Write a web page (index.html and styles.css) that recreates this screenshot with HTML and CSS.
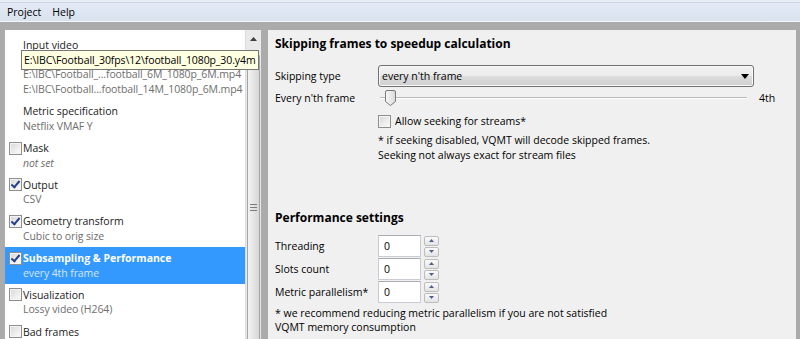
FILE: index.html
```html
<!DOCTYPE html>
<html lang="en">
<head>
<meta charset="UTF-8" />
<title>VQMT - Subsampling &amp; Performance</title>
<link rel="stylesheet" href="styles.css">
</head>
<body>
<div class="titlestrip"></div>
<div class="menubar">
  <span class="menu-item">Project</span>
  <span class="menu-item">Help</span>
</div>
<div class="workspace">
  <div class="tree-pane">
    <ul class="tree">
      <li class="node">
        <div class="node-title no-check">Input video</div>
        <div class="node-sub">E:\IBC\Football_30fps\12\football_1080p_30.y4m</div>
        <div class="node-sub">E:\IBC\Football_...football_6M_1080p_6M.mp4</div>
        <div class="node-sub">E:\IBC\Football...football_14M_1080p_6M.mp4</div>
      </li>
      <li class="node">
        <div class="node-title no-check">Metric specification</div>
        <div class="node-sub">Netflix VMAF Y</div>
      </li>
      <li class="node">
        <div class="node-title"><span class="check"></span>Mask</div>
        <div class="node-sub italic">not set</div>
      </li>
      <li class="node">
        <div class="node-title"><span class="check checked"></span>Output</div>
        <div class="node-sub">CSV</div>
      </li>
      <li class="node">
        <div class="node-title"><span class="check checked"></span>Geometry transform</div>
        <div class="node-sub">Cubic to orig size</div>
      </li>
      <li class="node selected">
        <div class="node-title"><span class="check checked"></span>Subsampling &amp; Performance</div>
        <div class="node-sub">every 4th frame</div>
      </li>
      <li class="node">
        <div class="node-title"><span class="check"></span>Visualization</div>
        <div class="node-sub">Lossy video (H264)</div>
      </li>
      <li class="node">
        <div class="node-title"><span class="check"></span>Bad frames</div>
      </li>
    </ul>
    <div class="scrollbar">
      <div class="scroll-btn">
        <svg width="7" height="4" viewBox="0 0 7 4"><path d="M0 4 L3.5 0 L7 4 Z" fill="#404040"/></svg>
      </div>
      <div class="scroll-thumb">
        <span class="grip"></span>
      </div>
    </div>
    <div class="tooltip">E:\IBC\Football_30fps\12\football_1080p_30.y4m</div>
  </div>
  <div class="splitter"></div>
  <div class="settings">
    <h2 class="section-title">Skipping frames to speedup calculation</h2>
    <div class="row first-row">
      <span class="row-label">Skipping type</span>
      <div class="combo">
        <span>every n'th frame</span>
        <svg width="8" height="5" viewBox="0 0 8 5"><path d="M0 0 H8 L4 5 Z" fill="#000"/></svg>
      </div>
    </div>
    <div class="row">
      <span class="row-label">Every n'th frame</span>
      <svg class="slider" width="367" height="17" viewBox="0 0 367 17">
        <defs>
          <linearGradient id="thumbFill" x1="0" y1="0" x2="1" y2="0">
            <stop offset="0" stop-color="#f7f7f7"/>
            <stop offset="1" stop-color="#dadada"/>
          </linearGradient>
        </defs>
        <rect x="0" y="7" width="367" height="1" fill="#b9b9b9"/>
        <rect x="0" y="8" width="367" height="1" fill="#ffffff"/>
        <path d="M5.5 2 Q5.5 0.5 7 0.5 H14 Q15.5 0.5 15.5 2 V11.5 L10.5 15.5 L5.5 11.5 Z" fill="url(#thumbFill)" stroke="#7a7a7a"/>
      </svg>
      <span class="slider-value">4th</span>
    </div>
    <div class="row check-row">
      <span class="check"></span>
      <span class="check-label">Allow seeking for streams*</span>
    </div>
    <div class="note indented">
      * if seeking disabled, VQMT will decode skipped frames.<br>
      Seeking not always exact for stream files
    </div>

    <h2 class="section-title second">Performance settings</h2>
    <div class="spin-rows">
      <div class="row">
        <span class="row-label">Threading</span>
        <div class="spin-input">0</div>
        <div class="spin-buttons">
          <span class="spin-btn"><svg width="5" height="3" viewBox="0 0 5 3"><path d="M0 3 L2.5 0 L5 3 Z" fill="#4d6189"/></svg></span>
          <span class="spin-btn"><svg width="5" height="3" viewBox="0 0 5 3"><path d="M0 0 H5 L2.5 3 Z" fill="#4d6189"/></svg></span>
        </div>
      </div>
      <div class="row">
        <span class="row-label">Slots count</span>
        <div class="spin-input">0</div>
        <div class="spin-buttons">
          <span class="spin-btn"><svg width="5" height="3" viewBox="0 0 5 3"><path d="M0 3 L2.5 0 L5 3 Z" fill="#4d6189"/></svg></span>
          <span class="spin-btn"><svg width="5" height="3" viewBox="0 0 5 3"><path d="M0 0 H5 L2.5 3 Z" fill="#4d6189"/></svg></span>
        </div>
      </div>
      <div class="row">
        <span class="row-label">Metric parallelism*</span>
        <div class="spin-input">0</div>
        <div class="spin-buttons">
          <span class="spin-btn"><svg width="5" height="3" viewBox="0 0 5 3"><path d="M0 3 L2.5 0 L5 3 Z" fill="#4d6189"/></svg></span>
          <span class="spin-btn"><svg width="5" height="3" viewBox="0 0 5 3"><path d="M0 0 H5 L2.5 3 Z" fill="#4d6189"/></svg></span>
        </div>
      </div>
    </div>
    <div class="note perf-note">
      * we recommend reducing metric parallelism if you are not satisfied<br>
      VQMT memory consumption
    </div>
  </div>
</div>
</body>
</html>
```

FILE: styles.css
```css
/* Base */
* {
  box-sizing: border-box;
}
body {
  margin: 0;
  width: 800px;
  height: 339px;
  overflow: hidden;
  background: #ababab;
  font-family: 'Open Sans', 'Noto Sans', sans-serif;
  font-size: 10.5px;
  color: #1a1a1a;
}

/* Window chrome */
.titlestrip {
  height: 3px;
  background: #e8edf4;
  border-bottom: 1px solid #ccd5e2;
}
.menubar {
  height: 19px;
  display: flex;
  align-items: center;
  gap: 11px;
  padding-left: 7px;
  background: linear-gradient(#e3eaf5, #d9e2f0);
  border-bottom: 1px solid #f3f6fb;
  color: #000;
}

/* Main area */
.workspace {
  display: flex;
  height: 317px;
  padding: 8px 4px 0 5px;
}
.tree-pane {
  position: relative;
  display: flex;
  width: 256px;
  flex-shrink: 0;
}
.tree {
  list-style: none;
  margin: 0;
  padding: 3.5px 0 0;
  width: 240px;
  background: #fff;
  overflow: hidden;
}
.node {
  padding: 3.7px 0 3px;
}
.node-title {
  display: flex;
  align-items: center;
  height: 15px;
  padding-left: 4px;
  white-space: nowrap;
}
.node-title.no-check {
  padding-left: 18px;
}
.node-sub {
  height: 15px;
  line-height: 15px;
  padding-left: 18px;
  color: #6e6e6e;
  white-space: nowrap;
  letter-spacing: -0.1px;
}
.node-sub.italic {
  font-style: italic;
}
.node.selected {
  background: #3399ff;
}
.node.selected .node-title {
  color: #fff;
  font-weight: 700;
}
.node.selected .node-sub {
  color: #d2e7ff;
}

/* Checkboxes */
.check {
  display: inline-block;
  position: relative;
  width: 13px;
  height: 13px;
  margin-right: 1px;
  flex-shrink: 0;
  border: 1px solid #8f8f8f;
  background: linear-gradient(135deg, #d8d8d8, #fdfdfd);
  box-shadow: inset 0 0 0 1px #f4f4f4;
}
.check.checked::after {
  content: '';
  position: absolute;
  left: 3px;
  top: 0;
  width: 3px;
  height: 7px;
  border-right: 2px solid #27408b;
  border-bottom: 2px solid #27408b;
  transform: rotate(40deg);
}

/* Scrollbar of the tree */
.scrollbar {
  width: 16px;
  display: flex;
  flex-direction: column;
  background: #e9e9e9;
  border-left: 1px solid #dcdcdc;
}
.scroll-btn {
  height: 17px;
  display: flex;
  align-items: center;
  justify-content: center;
}
.scroll-thumb {
  flex: 1;
  margin: 8px 1px 0;
  border: 1px solid #a4a4a4;
  border-bottom: none;
  border-radius: 2px 2px 0 0;
  background: linear-gradient(90deg, #f3f3f3, #e2e2e2 60%, #d6d6d6);
  display: flex;
  justify-content: center;
  padding-top: 148px;
}
.grip {
  width: 7px;
  height: 7px;
  background: repeating-linear-gradient(#7c7c7c 0 1px, transparent 1px 3px);
}
.tooltip {
  position: absolute;
  left: 16px;
  top: 20px;
  height: 20px;
  line-height: 18px;
  padding: 0 2px;
  background: #ffffe1;
  border: 1px solid #767676;
  color: #000;
  white-space: nowrap;
  letter-spacing: -0.1px;
}
.splitter {
  width: 7px;
  flex-shrink: 0;
}

/* Settings panel */
.settings {
  flex: 1;
  background: #f0f0f0;
  padding: 5px 0 0 7px;
  color: #000;
}
.section-title {
  margin: 0;
  height: 18px;
  line-height: 18px;
  font-size: 12px;
  font-weight: 700;
}
.section-title.second {
  margin-top: 46px;
}
.row {
  display: flex;
  align-items: center;
  height: 22px;
}
.first-row {
  margin-top: 12px;
}
.row-label {
  width: 103px;
  flex-shrink: 0;
}
.combo {
  width: 376px;
  height: 22px;
  display: flex;
  align-items: center;
  justify-content: space-between;
  padding: 0 3px 0 3px;
  border: 1px solid #707070;
  border-radius: 3px;
  background: linear-gradient(#f2f2f2 0%, #ebebeb 50%, #dddddd 51%, #cfcfcf 100%);
  box-shadow: inset 0 0 0 1px #fafafa;
}
.combo svg {
  margin-right: 1px;
}
.slider {
  margin-left: 2px;
}
.slider-value {
  margin-left: 12px;
}
.check-row {
  height: 20px;
  margin-top: 2px;
  padding-left: 103px;
}
.check-label {
  margin-left: 3px;
}
.note {
  line-height: 15px;
}
.note.indented {
  margin-top: 2px;
  padding-left: 103px;
}
.spin-rows {
  margin-top: 8px;
  display: flex;
  flex-direction: column;
  gap: 1px;
}
.spin-input {
  width: 43px;
  height: 22px;
  line-height: 20px;
  padding-left: 5px;
  background: #fff;
  border: 1px solid #c9ccd2;
  border-top-color: #abadb3;
}
.spin-buttons {
  margin-left: 3px;
  display: flex;
  flex-direction: column;
  gap: 1px;
}
.spin-btn {
  width: 15px;
  height: 10px;
  display: flex;
  align-items: center;
  justify-content: center;
  border: 1px solid #bdbdbd;
  border-radius: 2px;
  background: linear-gradient(#fbfbfb, #e3e3e3);
}
.perf-note {
  margin-top: 3px;
  line-height: 14px;
}
```
